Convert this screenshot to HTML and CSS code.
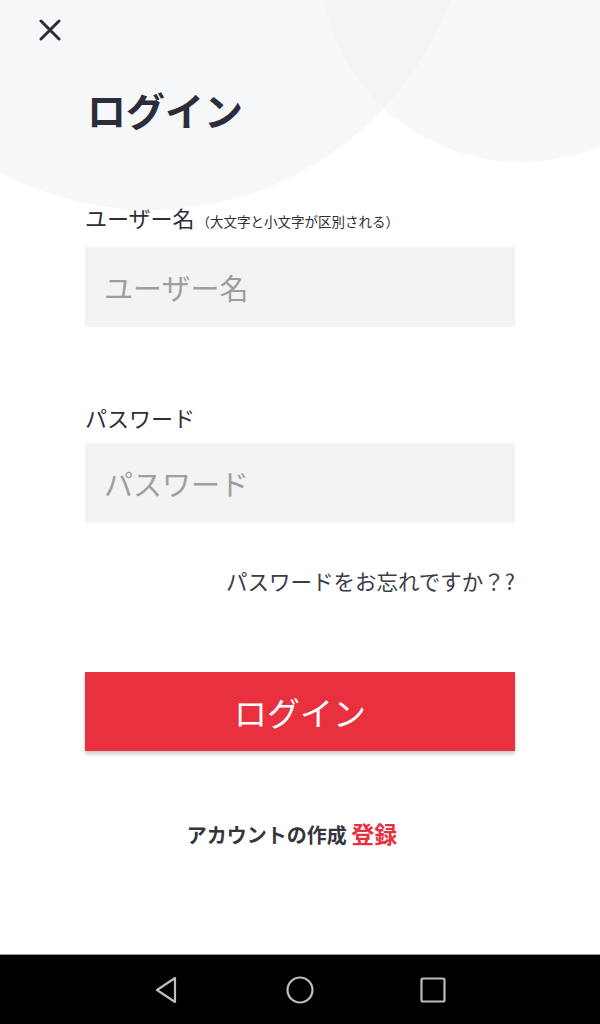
FILE: index.html
```html
<!DOCTYPE html>
<html lang="ja">
<head>
    <meta charset="UTF-8">
    <meta name="viewport" content="width=device-width, initial-scale=1.0">
    <title>ログイン</title>
    <link rel="stylesheet" href="styles.css">
</head>
<body>
    <div class="screen">
        <div class="bubble bubble-left"></div>
        <div class="bubble bubble-right"></div>

        <div class="top">
            <button class="close" type="button" aria-label="閉じる">
                <svg width="22" height="22" viewBox="0 0 22 22">
                    <path d="M2 2 L20 20 M20 2 L2 20" stroke="#2b2e3a" stroke-width="3" stroke-linecap="round" fill="none"/>
                </svg>
            </button>
        </div>

        <form class="login">
            <h1>ログイン</h1>

            <label class="field-label label-user" for="username">ユーザー名<span class="note">（大文字と小文字が区別される）</span></label>
            <input class="field" type="text" id="username" placeholder="ユーザー名">

            <label class="field-label label-pass" for="password">パスワード</label>
            <input class="field" type="password" id="password" placeholder="パスワード">

            <a class="forgot" href="#">パスワードをお忘れですか？?</a>

            <button class="submit" type="button">ログイン</button>

            <p class="signup">アカウントの作成 <a href="#">登録</a></p>
        </form>
    </div>

    <nav class="navbar">
        <svg width="30" height="30" viewBox="0 0 30 30">
            <path d="M23 3 L23 27 L5 15 Z" stroke="#bdbdbd" stroke-width="2.2" stroke-linejoin="round" fill="none"/>
        </svg>
        <svg width="30" height="30" viewBox="0 0 30 30">
            <circle cx="15" cy="15" r="12.5" stroke="#bdbdbd" stroke-width="2.2" fill="none"/>
        </svg>
        <svg width="30" height="30" viewBox="0 0 30 30">
            <rect x="3.5" y="3.5" width="23" height="23" rx="1.5" stroke="#bdbdbd" stroke-width="2.2" fill="none"/>
        </svg>
    </nav>
</body>
</html>
```

FILE: styles.css
```css
* {
    box-sizing: border-box;
}

body {
    margin: 0;
    font-family: "Noto Sans CJK JP", "Noto Sans", sans-serif;
    color: #2d303b;
    background: #fff;
}

.screen {
    position: relative;
    height: 954px;
    overflow: hidden;
}

.bubble {
    position: absolute;
    border-radius: 50%;
}

.bubble-left {
    left: -170px;
    top: -430px;
    width: 640px;
    height: 640px;
    background: linear-gradient(90deg, rgba(244, 246, 248, 0.8), rgba(240, 242, 245, 0.6));
}

.bubble-right {
    left: 320px;
    top: -240px;
    width: 402px;
    height: 402px;
    background: rgba(238, 241, 244, 0.5);
}

.top {
    position: relative;
    height: 60px;
    padding: 19px 0 0 39px;
}

.close {
    display: block;
    padding: 0;
    border: none;
    background: none;
    line-height: 0;
}

.login {
    position: relative;
    display: flex;
    flex-direction: column;
    padding: 0 85px;
}

h1 {
    margin: 26px 0 0 2px;
    font-size: 39px;
    line-height: 46px;
    font-weight: 700;
    color: #2b2e3a;
}

.field-label {
    font-size: 22px;
    line-height: 30px;
    color: #2d303b;
}

.label-user {
    margin-top: 70px;
}

.label-pass {
    margin-top: 75px;
}

.note {
    font-size: 13.5px;
    margin-left: 2px;
}

.field {
    width: 100%;
    height: 80px;
    margin-top: 11px;
    padding: 0 19px;
    border: none;
    background: #f3f3f3;
    font-family: inherit;
    font-size: 29px;
    color: #333;
    outline: none;
}

.field::placeholder {
    color: #9e9e9e;
}

.forgot {
    margin-top: 43px;
    align-self: flex-end;
    font-size: 21.5px;
    line-height: 30px;
    color: #3a3d47;
    text-decoration: none;
}

.submit {
    margin-top: 76px;
    height: 79px;
    border: none;
    background: #e9303f;
    color: #fff;
    font-family: inherit;
    font-size: 33px;
    box-shadow: 0 3px 4px rgba(0, 0, 0, 0.22);
}

.signup {
    margin: 67px 0 0;
    padding-right: 16px;
    text-align: center;
    font-size: 20px;
    line-height: 30px;
    font-weight: 700;
    color: #33363f;
}

.signup a {
    font-size: 23px;
    color: #e9303f;
    text-decoration: none;
}

.navbar {
    height: 70px;
    background: #000;
    border-top: 1px solid #9a9a9a;
    display: flex;
    justify-content: center;
    align-items: center;
    gap: 103px;
}
```
